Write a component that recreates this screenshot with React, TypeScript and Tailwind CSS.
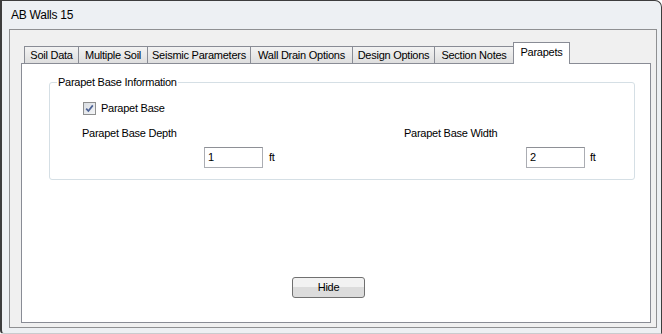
const tabs = [
  { label: "Soil Data", w: "w-[55px]" },
  { label: "Multiple Soil", w: "w-[70px]" },
  { label: "Seismic Parameters", w: "w-[104px]" },
  { label: "Wall Drain Options", w: "w-[103px]" },
  { label: "Design Options", w: "w-[83px]" },
  { label: "Section Notes", w: "w-[80px]" },
];

function CheckBox() {
  return (
    <span className="w-[13px] h-[13px] border border-[#8e8f8f] bg-gradient-to-br from-[#d9dde2] to-[#f4f5f7] flex items-center justify-center">
      <svg width="9" height="9" viewBox="0 0 9 9">
        <path d="M1.2 4.6 L3.4 7 L7.8 1.4" fill="none" stroke="#4d6396" strokeWidth="1.7" />
      </svg>
    </span>
  );
}

function Field({ label, value, gap }: { label: string; value: string; gap: string }) {
  return (
    <div className="flex flex-col">
      <div className="h-[13px] leading-[13px]">{label}</div>
      <div className="flex items-center mt-[7px] pl-[122px]">
        <div className="w-[59px] h-[21px] border border-[#abadb3] border-t-[#8e9096] bg-white pl-[3px] leading-[19px]">
          {value}
        </div>
        <span className={gap}>ft</span>
      </div>
    </div>
  );
}

export default function App() {
  return (
    <div className="w-[662px] h-[334px] bg-[#edf0f3] border-t border-l-2 border-r border-b border-[#3d3d3d] border-b-[#c9cbce] rounded-tr-[7px] rounded-bl-[4px] flex flex-col font-['Liberation_Sans',Arial,sans-serif] text-[11px] tracking-[-0.25px] text-black">
      <div className="h-[28px] pl-[9px] pt-[7px] text-[12px] leading-[14px]">AB Walls 15</div>

      {/* client area */}
      <div className="h-[299px] ml-[7px] mr-[4px] border border-[#8f9092] bg-[#f0f0f0] flex flex-col pt-[12px] pl-[11px] pr-[5px] pb-[4px]">
        {/* tab strip */}
        <div className="h-[21px] flex items-end pl-[3px]">
          {tabs.map((t, i) => (
            <div
              key={t.label}
              className={`${t.w} h-[17px] ${i > 0 ? "-ml-px" : ""} border-t border-l border-r border-[#898c95] bg-gradient-to-b from-[#f3f3f3] to-[#dedede] flex items-center justify-center leading-[13px] pt-[1px]`}
            >
              {t.label}
            </div>
          ))}
          <div className="w-[57px] h-[22px] -ml-px -mb-px relative z-10 border-t border-l border-r border-[#898c95] bg-white flex justify-center pt-[3px] leading-[13px]">
            Parapets
          </div>
        </div>

        {/* tab page */}
        <div className="flex-1 bg-white border border-[#898c95] flex flex-col">
          <div className="relative mt-[18px] ml-[27px] mr-[15px] h-[98px] border border-[#d5dfe5] rounded-[3px] pl-[32px] pt-[19px]">
            <span className="absolute left-[7px] -top-[7px] px-[1px] bg-white leading-[13px]">
              Parapet Base Information
            </span>
            <div className="flex items-center h-[13px] pl-[1px]">
              <CheckBox />
              <span className="ml-[5px] leading-[13px]">Parapet Base</span>
            </div>
            <div className="flex mt-[12px]">
              <div className="w-[322px]">
                <Field label="Parapet Base Depth" value="1" gap="ml-[6px]" />
              </div>
              <Field label="Parapet Base Width" value="2" gap="ml-[5px]" />
            </div>
          </div>

          <button className="mt-[97px] ml-[270px] w-[73px] h-[21px] rounded-[3px] border border-[#707070] bg-gradient-to-b from-[#f2f2f2] from-50% to-[#dcdcdc] to-50% leading-[19px] text-center">
            Hide
          </button>
        </div>
      </div>
    </div>
  );
}
